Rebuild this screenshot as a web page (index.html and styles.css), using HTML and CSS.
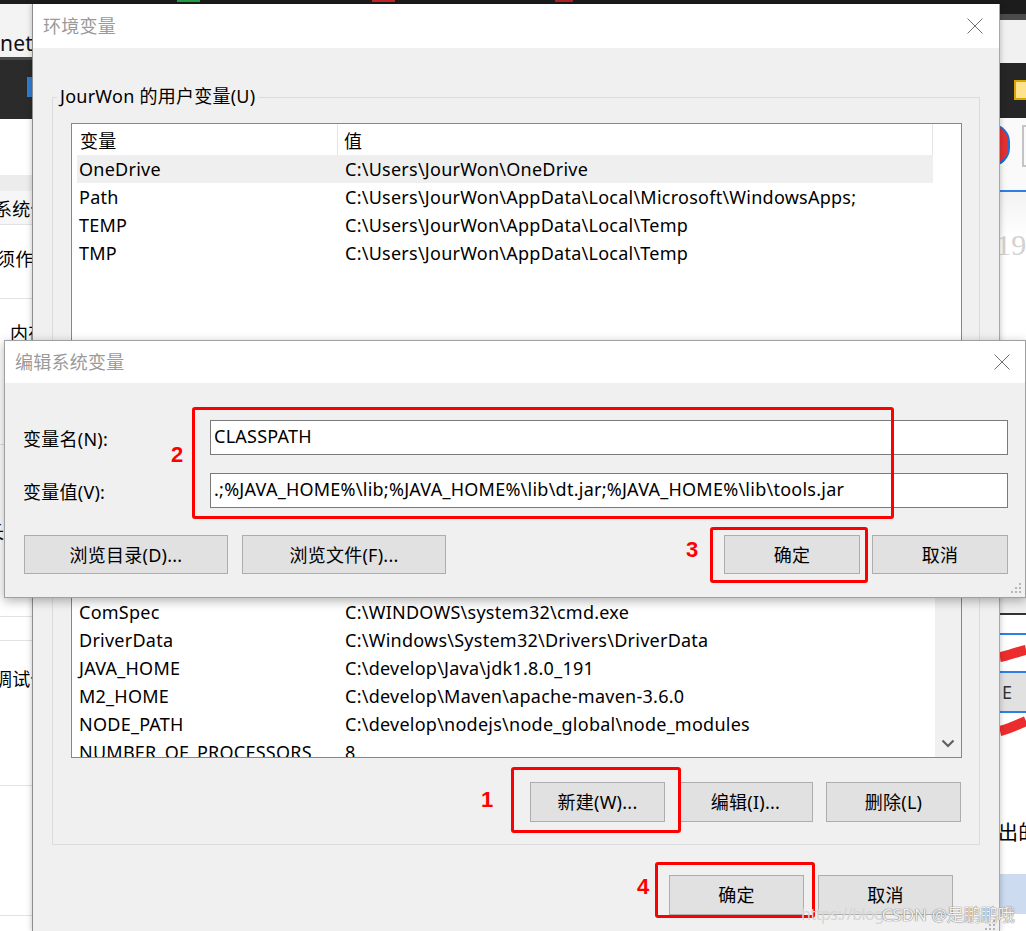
FILE: index.html
```html
<!DOCTYPE html>
<html lang="zh-CN">
<head>
    <meta charset="UTF-8">
    <meta name="viewport" content="width=device-width, initial-scale=1.0">
    <title>环境变量</title>
    <link rel="stylesheet" href="styles.css">
</head>
<body>
    <div class="desktop">
        <!-- strip of the taskbar above the windows -->
        <div class="top-strip">
            <span class="chip chip-green"></span>
            <span class="chip chip-red"></span>
            <span class="chip chip-red2"></span>
        </div>

        <!-- browser page peeking out on the left -->
        <div class="side side-left">
            <div class="strip-row url-row">net/</div>
            <div class="strip-row dark-row"><span class="tab-icon"></span></div>
            <div class="strip-row blank-row"></div>
            <div class="strip-row shade-row"></div>
            <div class="strip-row text-row info-row"><span class="clip-6">系统信息</span></div>
            <div class="strip-row text-row need-row"><span class="clip-3">须作为</span></div>
            <div class="strip-row text-row mem-row"><span class="pad-10">内存</span></div>
            <div class="strip-row text-row long-row"><span class="clip-14">长度</span></div>
            <div class="strip-row thin-row"></div>
            <div class="strip-row text-row debug-row"><span class="clip-6">调试信息</span></div>
            <div class="strip-row tall-row"></div>
            <div class="strip-row"></div>
        </div>

        <!-- 环境变量 -->
        <div class="window env-window">
            <div class="title-bar">
                <span class="title">环境变量</span>
                <svg class="close" width="16" height="16" viewBox="0 0 16 16"><path d="M0.5 0.5 L15.5 15.5 M15.5 0.5 L0.5 15.5" stroke="#707070" stroke-width="1" fill="none"/></svg>
            </div>
            <div class="window-body">
                <fieldset class="group user-group">
                    <legend>JourWon 的用户变量(U)</legend>
                    <div class="list user-list">
                        <div class="list-main">
                            <div class="list-head">
                                <div class="head-name">变量</div>
                                <div class="head-value">值</div>
                            </div>
                            <div class="list-row selected"><div class="cell-name">OneDrive</div><div class="cell-value">C:\Users\JourWon\OneDrive</div></div>
                            <div class="list-row"><div class="cell-name">Path</div><div class="cell-value">C:\Users\JourWon\AppData\Local\Microsoft\WindowsApps;</div></div>
                            <div class="list-row"><div class="cell-name">TEMP</div><div class="cell-value">C:\Users\JourWon\AppData\Local\Temp</div></div>
                            <div class="list-row"><div class="cell-name">TMP</div><div class="cell-value">C:\Users\JourWon\AppData\Local\Temp</div></div>
                        </div>
                    </div>
                    <div class="button-row">
                        <button class="btn">新建(N)...</button>
                        <button class="btn">编辑(E)...</button>
                        <button class="btn">删除(D)</button>
                    </div>
                </fieldset>

                <fieldset class="group sys-group">
                    <legend>系统变量(S)</legend>
                    <div class="list sys-list">
                        <div class="list-main">
                            <div class="list-head">
                                <div class="head-name">变量</div>
                                <div class="head-value">值</div>
                            </div>
                            <div class="list-row"><div class="cell-name">ComSpec</div><div class="cell-value">C:\WINDOWS\system32\cmd.exe</div></div>
                            <div class="list-row"><div class="cell-name">DriverData</div><div class="cell-value">C:\Windows\System32\Drivers\DriverData</div></div>
                            <div class="list-row"><div class="cell-name">JAVA_HOME</div><div class="cell-value">C:\develop\Java\jdk1.8.0_191</div></div>
                            <div class="list-row"><div class="cell-name">M2_HOME</div><div class="cell-value">C:\develop\Maven\apache-maven-3.6.0</div></div>
                            <div class="list-row"><div class="cell-name">NODE_PATH</div><div class="cell-value">C:\develop\nodejs\node_global\node_modules</div></div>
                            <div class="list-row"><div class="cell-name">NUMBER_OF_PROCESSORS</div><div class="cell-value">8</div></div>
                        </div>
                        <div class="scrollbar">
                            <div class="scroll-down">
                                <svg width="14" height="9" viewBox="0 0 14 9"><path d="M1.5 1.5 L7 7 L12.5 1.5" stroke="#606060" stroke-width="2.2" fill="none"/></svg>
                            </div>
                        </div>
                    </div>
                    <div class="button-row">
                        <button class="btn">新建(W)...</button>
                        <button class="btn">编辑(I)...</button>
                        <button class="btn">删除(L)</button>
                    </div>
                </fieldset>

                <div class="footer">
                    <button class="btn">确定</button>
                    <button class="btn">取消</button>
                </div>
            </div>
            <svg class="grip" width="12" height="12" viewBox="0 0 12 12" fill="#b5b5b5">
                <rect x="8" y="0" width="2" height="2"/><rect x="4" y="4" width="2" height="2"/><rect x="8" y="4" width="2" height="2"/>
                <rect x="0" y="8" width="2" height="2"/><rect x="4" y="8" width="2" height="2"/><rect x="8" y="8" width="2" height="2"/>
            </svg>
        </div>

        <!-- page on the right -->
        <div class="side side-right">
            <div class="strip-row r-dark"></div>
            <div class="strip-row r-line"></div>
            <div class="strip-row r-light"></div>
            <div class="strip-row r-bar"><span class="folder-chip"></span></div>
            <div class="strip-row r-icons">
                <span class="icon-red"></span>
                <span class="icon-grey"></span>
            </div>
            <div class="strip-row r-blue"></div>
            <div class="strip-row r-page"><span class="faded">19</span></div>
            <div class="strip-row r-hidden"></div>
            <div class="strip-row r-grey"></div>
            <div class="strip-row r-rule-dark"></div>
            <div class="strip-row r-cell"></div>
            <div class="strip-row r-rule"></div>
            <div class="strip-row r-cell r-scribble">
                <svg width="26" height="26" viewBox="0 0 26 26"><path d="M0 17 C8 16 16 12 26 10" stroke="#ec2d2d" stroke-width="10" fill="none"/></svg>
            </div>
            <div class="strip-row r-rule"></div>
            <div class="strip-row r-btn"><span>E</span></div>
            <div class="strip-row r-rule"></div>
            <div class="strip-row r-cell r-scribble2">
                <svg width="26" height="26" viewBox="0 0 26 26"><path d="M0 18 C9 16 17 12 26 8" stroke="#ec2d2d" stroke-width="10" fill="none"/></svg>
            </div>
            <div class="strip-row r-text"><span>出的</span></div>
            <div class="strip-row r-footer"></div>
        </div>

        <!-- 编辑系统变量 -->
        <div class="window edit-window">
            <div class="title-bar edit-title">
                <span class="title">编辑系统变量</span>
                <svg class="close" width="16" height="16" viewBox="0 0 16 16"><path d="M0.5 0.5 L15.5 15.5 M15.5 0.5 L0.5 15.5" stroke="#707070" stroke-width="1" fill="none"/></svg>
            </div>
            <div class="edit-body">
                <div class="field-grid">
                    <label for="varName">变量名(N):</label>
                    <input id="varName" type="text" value="CLASSPATH">
                    <label for="varValue">变量值(V):</label>
                    <input id="varValue" type="text" value=".;%JAVA_HOME%\lib;%JAVA_HOME%\lib\dt.jar;%JAVA_HOME%\lib\tools.jar">
                </div>
                <div class="edit-buttons">
                    <button class="btn btn-wide">浏览目录(D)...</button>
                    <button class="btn btn-wide">浏览文件(F)...</button>
                    <span class="spacer"></span>
                    <button class="btn btn-ok">确定</button>
                    <button class="btn btn-ok">取消</button>
                </div>
            </div>
            <svg class="grip" width="12" height="12" viewBox="0 0 12 12" fill="#b5b5b5">
                <rect x="8" y="0" width="2" height="2"/><rect x="4" y="4" width="2" height="2"/><rect x="8" y="4" width="2" height="2"/>
                <rect x="0" y="8" width="2" height="2"/><rect x="4" y="8" width="2" height="2"/><rect x="8" y="8" width="2" height="2"/>
            </svg>
        </div>

        <!-- red annotations drawn on top of the screenshot -->
        <div class="mark mark-box box-2"></div>
        <div class="mark mark-box box-3"></div>
        <div class="mark mark-box box-1"></div>
        <div class="mark mark-box box-4"></div>
        <div class="mark mark-num num-1">1</div>
        <div class="mark mark-num num-2">2</div>
        <div class="mark mark-num num-3">3</div>
        <div class="mark mark-num num-4">4</div>

        <div class="watermark"><span class="wm-url">https://blog</span><span class="wm-name">CSDN @是鹏鹏哦</span></div>
    </div>
</body>
</html>
```

FILE: styles.css
```css
* {
    box-sizing: border-box;
}
body {
    margin: 0;
    font-family: "Noto Sans", "Noto Sans CJK SC", sans-serif;
    font-size: 18px;
    letter-spacing: 0.25px;
    color: #000;
    overflow: hidden;
}
.desktop {
    position: relative;
    width: 1026px;
    height: 931px;
    display: grid;
    grid-template-columns: 32px 968px 26px;
    grid-template-rows: 4px 927px;
    background: #fff;
    overflow: hidden;
}

/* taskbar strip */
.top-strip {
    grid-column: 1 / 4;
    background: #1c1c1c;
    display: flex;
    align-items: flex-start;
}
.chip {
    height: 2px;
    width: 23px;
}
.chip-green {
    margin-left: 177px;
    background: #1fa34a;
}
.chip-red {
    margin-left: 172px;
    background: #c62828;
}
.chip-red2 {
    margin-left: 160px;
    background: #b32424;
    width: 18px;
}

/* background pages */
.side {
    grid-row: 2;
    display: flex;
    flex-direction: column;
    overflow: hidden;
    background: #fff;
}
.side-left {
    grid-column: 1;
}
.side-right {
    grid-column: 3;
}
.strip-row {
    flex: none;
    overflow: hidden;
    white-space: nowrap;
}
.url-row {
    height: 56px;
    background: #f3f3f3;
    font-size: 21px;
    line-height: 78px;
    color: #111;
    border-bottom: 3px solid #4a4a4a;
}
.dark-row {
    height: 59px;
    background: #2b2b2b;
}
.tab-icon {
    display: block;
    margin: 17px 0 0 27px;
    width: 5px;
    height: 20px;
    background: #2e7dd6;
}
.blank-row {
    height: 56px;
}
.shade-row {
    height: 16px;
    background: #ececec;
}
.text-row {
    display: flex;
    align-items: center;
    border-bottom: 1px solid #e2e2e2;
}
.info-row {
    height: 34px;
    background: #f6f6f6;
}
.need-row {
    height: 74px;
    align-items: flex-start;
    padding-top: 20px;
}
.mem-row {
    height: 146px;
    align-items: flex-start;
    padding-top: 20px;
}
.long-row {
    height: 172px;
}
.thin-row {
    height: 24px;
    border-bottom: 1px solid #e2e2e2;
}
.debug-row {
    height: 145px;
    align-items: flex-start;
    padding-top: 24px;
}
.tall-row {
    height: 130px;
    border-bottom: 1px solid #e2e2e2;
}
.clip-6 {
    margin-left: -6px;
}
.clip-3 {
    margin-left: -3px;
}
.clip-14 {
    margin-left: -14px;
}
.pad-10 {
    margin-left: 10px;
}

.r-dark {
    height: 10px;
    background: #1c1c1c;
}
.r-line {
    height: 6px;
    background: #4b4b4b;
}
.r-light {
    height: 43px;
    background: #f1f1f1;
}
.r-bar {
    height: 55px;
    background: #262626;
}
.folder-chip {
    display: block;
    margin: 17px 0 0 14px;
    width: 14px;
    height: 20px;
    background: #ffe38c;
    border: 2px solid #d8a600;
    border-right: none;
}
.r-icons {
    height: 72px;
    background: #fafafa;
    position: relative;
}
.icon-red {
    position: absolute;
    left: -8px;
    top: 6px;
    width: 18px;
    height: 42px;
    border-radius: 0 20px 20px 0;
    background: #e53030;
    border: 2px solid #1f6fd6;
}
.icon-grey {
    position: absolute;
    left: 22px;
    top: 7px;
    width: 8px;
    height: 42px;
    border: 2px solid #c4c4c4;
}
.r-blue {
    height: 2px;
    background: #2d7fe6;
}
.r-page {
    height: 148px;
    background: linear-gradient(#f2f2f2, #fff 30%);
}
.faded {
    display: block;
    margin: 36px 0 0 -4px;
    font-family: "Liberation Serif", serif;
    font-size: 30px;
    color: #d2d2d2;
}
.r-hidden {
    height: 258px;
}
.r-grey {
    height: 15px;
    background: #efefef;
}
.r-rule-dark {
    height: 2px;
    background: #333;
}
.r-cell {
    height: 18px;
    background: #fff;
}
.r-rule {
    height: 2px;
    background: #2d7fe6;
}
.r-scribble {
    height: 36px;
}
.r-scribble svg, .r-scribble2 svg {
    display: block;
}
.r-scribble svg {
    margin-top: 5px;
}
.r-btn {
    height: 38px;
    background: #e1e1e1;
    font-size: 18px;
    line-height: 38px;
    color: #333;
    padding-left: 2px;
}
.r-scribble2 {
    height: 26px;
}
.r-text {
    height: 135px;
    padding-top: 78px;
    font-size: 20px;
}
.r-text span {
    margin-left: -2px;
}
.r-footer {
    height: 40px;
    background: #cddbf0;
}

/* windows */
.window {
    position: relative;
    background: #f0f0f0;
    display: flex;
    flex-direction: column;
    overflow: hidden;
}
.env-window {
    grid-column: 2;
    grid-row: 2;
    border-left: 1px solid #8d8d8d;
    border-right: 1px solid #a8a8a8;
    box-shadow: 0 0 6px rgba(0, 0, 0, 0.25);
    z-index: 1;
}
.title-bar {
    flex: none;
    height: 44px;
    background: #fff;
    display: flex;
    align-items: center;
    justify-content: space-between;
    padding: 0 16px 2px 10px;
}
.title {
    color: #9a9a9a;
    font-size: 18px;
}
.close {
    display: block;
    margin-top: 2px;
}
.window-body {
    padding: 0 19px;
    display: flex;
    flex-direction: column;
}
.group {
    margin: 0;
    border: 1px solid #dcdcdc;
    padding: 0 17px 16px 4px;
    min-width: 0;
}
.group legend {
    padding: 0 3px;
    height: 22px;
    line-height: 21px;
    font-size: 18px;
}
.user-group {
    margin-top: 38px;
}
.sys-group {
    margin-top: 78px;
    padding-bottom: 22px;
}
.list {
    margin: 15px 0 0 14px;
    border: 1px solid #828790;
    background: #fff;
    display: flex;
    overflow: hidden;
}
.user-list {
    height: 257px;
}
.sys-list {
    height: 192px;
}
.list-main {
    flex: none;
    width: 861px;
    display: flex;
    flex-direction: column;
}
.list-head {
    flex: none;
    height: 31px;
    display: flex;
    align-items: center;
}
.head-name {
    width: 266px;
    height: 100%;
    padding-left: 8px;
    display: flex;
    align-items: center;
    border-right: 1px solid #e5e5e5;
}
.head-value {
    flex: 1;
    height: 100%;
    padding-left: 6px;
    display: flex;
    align-items: center;
    border-right: 1px solid #e5e5e5;
}
.list-row {
    flex: none;
    height: 28px;
    margin-left: 5px;
    display: flex;
    align-items: center;
    white-space: nowrap;
}
.list-row.selected {
    background: #efefef;
}
.cell-name {
    width: 261px;
    padding-left: 2px;
}
.cell-value {
    padding-left: 7px;
}
.scrollbar {
    margin-left: 2px;
    flex: 1;
    background: #f0f0f0;
    display: flex;
    flex-direction: column;
    justify-content: flex-end;
}
.scroll-down {
    height: 28px;
    display: flex;
    align-items: center;
    justify-content: center;
}
.button-row {
    margin-top: 24px;
    display: flex;
    justify-content: flex-end;
    gap: 13px;
    padding-right: 1px;
}
.user-group .button-row {
    margin-top: 14px;
}
.btn {
    width: 135px;
    height: 40px;
    background: #e1e1e1;
    border: 1px solid #adadad;
    border-radius: 0;
    font-family: "Noto Sans", "Noto Sans CJK SC", sans-serif;
    font-size: 18px;
    letter-spacing: 0.25px;
    color: #000;
    padding: 0 0 2px;
}
.footer {
    margin-top: 30px;
    padding-right: 27px;
    display: flex;
    justify-content: flex-end;
    gap: 14px;
}
.grip {
    position: absolute;
    right: 2px;
    bottom: 2px;
}
.env-window .grip {
    bottom: -1px;
}

/* edit dialog */
.edit-window {
    position: absolute;
    left: 4px;
    top: 340px;
    width: 1022px;
    height: 258px;
    border: 1px solid #a0a0a0;
    box-shadow: 0 3px 10px rgba(0, 0, 0, 0.3);
    z-index: 2;
}
.edit-title {
    height: 42px;
    padding: 0 15px 2px 10px;
}
.edit-body {
    padding: 37px 17px 23px 18px;
    display: flex;
    flex-direction: column;
}
.field-grid {
    display: grid;
    grid-template-columns: 187px 1fr;
    row-gap: 18px;
    align-items: center;
}
.field-grid label {
    font-size: 18px;
}
.field-grid input {
    height: 35px;
    border: 1px solid #7a7a7a;
    background: #fff;
    font-family: "Noto Sans", "Noto Sans CJK SC", sans-serif;
    font-size: 18px;
    letter-spacing: 0.25px;
    color: #000;
    padding: 0 3px 3px;
    outline: none;
}
.edit-buttons {
    margin-top: 27px;
    display: flex;
    gap: 14px;
    padding-left: 1px;
}
.edit-buttons .btn {
    height: 39px;
}
.btn-wide {
    width: 204px;
}
.btn-ok {
    width: 136px;
}
.edit-buttons .btn-ok + .btn-ok {
    margin-left: -2px;
}
.spacer {
    flex: 1;
}

/* annotations */
.mark {
    position: absolute;
    z-index: 3;
}
.mark-box {
    border: 3px solid #ff0000;
    border-radius: 3px;
}
.box-2 {
    left: 192px;
    top: 407px;
    width: 702px;
    height: 112px;
}
.box-3 {
    left: 710px;
    top: 527px;
    width: 158px;
    height: 56px;
}
.box-1 {
    left: 511px;
    top: 767px;
    width: 170px;
    height: 66px;
}
.box-4 {
    left: 655px;
    top: 862px;
    width: 160px;
    height: 56px;
}
.mark-num {
    font-family: "Liberation Sans", Arial, sans-serif;
    font-weight: bold;
    font-size: 22px;
    line-height: 22px;
    letter-spacing: 0;
    color: #ff0000;
}
.num-1 {
    left: 481px;
    top: 789px;
}
.num-2 {
    left: 171px;
    top: 444px;
}
.num-3 {
    left: 686px;
    top: 539px;
}
.num-4 {
    left: 637px;
    top: 876px;
}
.watermark {
    position: absolute;
    z-index: 3;
    left: 801px;
    top: 901px;
    display: flex;
    align-items: center;
    white-space: nowrap;
    font-size: 17px;
    letter-spacing: 0;
}
.wm-url {
    color: #d6d6d6;
    font-size: 16px;
    letter-spacing: -0.5px;
}
.wm-name {
    margin-left: -2px;
    color: #f2f2f2;
    text-shadow: 0 0 1px #777, 0 0 1px #777;
}
```
